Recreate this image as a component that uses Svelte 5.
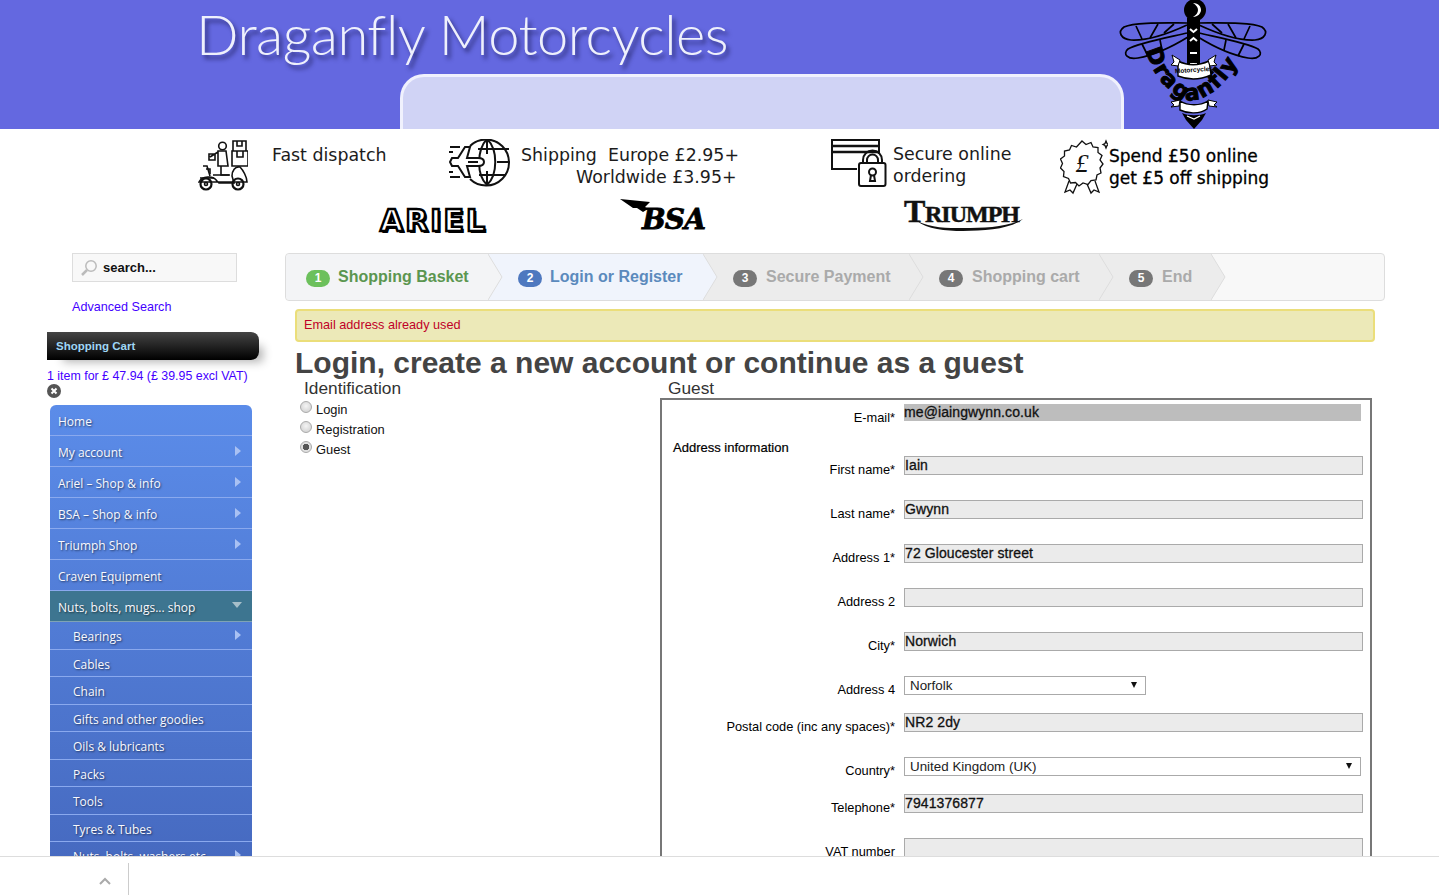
<script>
	const menu = [
		{ label: 'Home' },
		{ label: 'My account', more: true },
		{ label: 'Ariel – Shop & info', more: true },
		{ label: 'BSA – Shop & info', more: true },
		{ label: 'Triumph Shop', more: true },
		{ label: 'Craven Equipment' },
		{ label: 'Nuts, bolts, mugs... shop', open: true }
	];
	const submenu = [
		{ label: 'Bearings', more: true },
		{ label: 'Cables' },
		{ label: 'Chain' },
		{ label: 'Gifts and other goodies' },
		{ label: 'Oils & lubricants' },
		{ label: 'Packs' },
		{ label: 'Tools' },
		{ label: 'Tyres & Tubes' },
		{ label: 'Nuts, bolts, washers etc', more: true }
	];
	const steps = [
		{ n: 1, label: 'Shopping Basket', cls: 'done', width: 202 },
		{ n: 2, label: 'Login or Register', cls: 'current', width: 215 },
		{ n: 3, label: 'Secure Payment', cls: 'todo', width: 206 },
		{ n: 4, label: 'Shopping cart', cls: 'todo', width: 190 },
		{ n: 5, label: 'End', cls: 'todo', width: 112 }
	];
	const fields = [
		{ label: 'First name*', value: 'Iain' },
		{ label: 'Last name*', value: 'Gwynn' },
		{ label: 'Address 1*', value: '72 Gloucester street' },
		{ label: 'Address 2', value: '' },
		{ label: 'City*', value: 'Norwich' }
	];
</script>

<header class="banner">
	<h1 class="brand">Draganfly Motorcycles</h1>
	<div class="tab"></div>
	<svg class="logo" width="170" height="129" viewBox="1110 0 170 129" aria-hidden="true">
		<g fill="none" stroke="#000" stroke-width="1.7">
			<path d="M1187 23C1165 23 1135 22 1124 27C1117 32 1121 39 1131 40C1150 41 1172 32 1187 25" />
			<path d="M1187 33C1165 38 1138 43 1128 49C1122 54 1128 60 1138 58C1155 55 1175 45 1188 37" />
			<path d="M1136 26L1142 39M1158 24L1150 38M1174 24L1164 33M1142 44L1148 56M1160 40L1162 50" />
			<g transform="matrix(-1 0 0 1 2386 0)">
				<path d="M1187 23C1165 23 1135 22 1124 27C1117 32 1121 39 1131 40C1150 41 1172 32 1187 25" />
				<path d="M1187 33C1165 38 1138 43 1128 49C1122 54 1128 60 1138 58C1155 55 1175 45 1188 37" />
				<path d="M1136 26L1142 39M1158 24L1150 38M1174 24L1164 33M1142 44L1148 56M1160 40L1162 50" />
			</g>
		</g>
		<path d="M1187 18h13v60h-13z" fill="#000" />
		<path d="M1190 29l3.500 3 3.500-3M1190 41l3.500-3 3.500 3M1190 53h7M1190 64h7" stroke="#fff" stroke-width="2" fill="none" />
		<circle cx="1195" cy="10" r="11" fill="#000" />
		<path d="M1193 3c6 0 8 4 8 7s-3 7-8 7c3-2 5-4 5-7s-2-5-5-7z" fill="#fff" />
		<path id="logo-arc" d="M1146 50C1150 66 1158 80 1168 88C1178 97 1180 100 1192 100C1214 98 1233 76 1246 48" fill="none" />
		<text class="logo-word"><textPath href="#logo-arc">Draganfly</textPath></text>
		<path d="M1178 61c10 5 20 5 31 0l2 14c-11 5-23 5-33 1z" fill="#fff" stroke="#000" stroke-width="1.400" />
		<path d="M1180 101c8 5 20 5 28 0l-1 8c-7 5-19 5-27 1z" fill="#fff" stroke="#000" stroke-width="1.400" />
		<path d="M1180 60l-8-5 2 7-3 3 7 1zM1208 60l8-5-2 7 3 3-7 1zM1180 100l-9 2 3 3-3 2 8-1zM1208 100l9 2-3 3 3 2-8-1z" fill="#fff" stroke="#000" stroke-width="1" />
		<path d="M1182 113c6 3 18 3 24 0l-4 7-8 9-8-9z" fill="#000" />
		<path d="M1187 116l7 3 6-3" stroke="#fff" stroke-width="1.200" fill="none" />
		<text x="1194" y="72" text-anchor="middle" transform="rotate(-4 1194 72)" class="logo-small">Motorcycles</text>
	</svg>
</header>

<section class="promos">
	<div class="promo-row">
		<div class="promo">
			<svg class="scooter" width="50" height="52" viewBox="198 140 50 52" fill="none" stroke="#111" stroke-width="1.600" aria-hidden="true">
				<circle cx="222.500" cy="147" r="3.800" />
				<path d="M218 152h8l2 15h-10zM210 158l8-5M209 155h6v6h-6zM221 167v9h9" />
				<path d="M233 142h13v10h-13zM237 142v5h5v-5M232 152h16v15h-16zM237 152v6h6v-6" />
				<path d="M203 167h4l3 10M199 183c3-6 14-7 18-1l2 2h15l-2-7c0-5 3-10 8-9 3 3 7 10 7 15h-48z" />
				<path d="M206 170h4v5M213 176h16M200 179h14" />
				<circle cx="206" cy="185" r="5.500" stroke-width="2.200" />
				<circle cx="238" cy="185" r="5.500" stroke-width="2.200" />
				<circle cx="206" cy="185" r="1.500" />
				<circle cx="238" cy="185" r="1.500" />
			</svg>
			<p class="promo-text fast">Fast dispatch</p>
		</div>
		<div class="promo">
			<svg class="globe" width="62" height="48" viewBox="449 140 62 48" fill="none" stroke="#111" stroke-width="2" aria-hidden="true">
				<path d="M470 147A23 23 0 1 1 470 180" />
				<path d="M487 140C477 150 476 176 487 186M487 140C498 150 498 176 487 186M487 140V155M487 172V186M478 150H509M479 176H506M497 163H510" />
				<path fill="#fff" d="M452 159h6l7-11h5l-3 11h11c4 0 6 2 6 4s-2 4-6 4h-11l3 11h-5l-7-11h-6l-2-4z" />
				<path d="M450 148h10M449 153h4M450 178h10M449 173h4M468 163h10" />
			</svg>
			<p class="promo-text shipping">Shipping&nbsp; Europe £2.95+<br /><span class="indent">Worldwide £3.95+</span></p>
		</div>
		<div class="promo">
			<svg class="card" width="57" height="48" viewBox="831 140 57 48" fill="none" stroke="#111" stroke-width="2" aria-hidden="true">
				<path d="M857 170H832V141H879V155" />
				<path d="M832 147H879M832 153H879" stroke-width="2.500" />
				<rect x="859" y="164" width="26.500" height="23" rx="2" fill="#fff" />
				<path d="M863 164v-3a9.500 9.500 0 0 1 19 0v3M867 164v-3a5.500 5.500 0 0 1 11 0v3" />
				<circle cx="872.500" cy="173" r="3.500" />
				<path d="M871 176l-1 6h5l-1-6" />
			</svg>
			<p class="promo-text secure">Secure online<br />ordering</p>
		</div>
		<div class="promo">
			<svg class="rosette" width="48" height="56" viewBox="1060 139 48 56" fill="none" stroke="#111" stroke-width="1.300" aria-hidden="true">
				<path d="M1082 141l4 3.500 5-2 2 4.500 5 .5 0 5 4 3-2 4.500 3 4-3 4 1 5-4 2-1 5-5 .5-3 4-5-1.500-4 3-3.500-3.500-5 .5-2-4.500-5-2 .5-5-3.500-3.500 2-4.500-2-4.500 4-3 0-5 5-1 2-4.500 5 1.500z" />
				<path d="M1069 181l-4 11 5-2 3 3 4-9M1095 181l4 11-5-2-3 3-4-9" />
				<path d="M1106 141l1 2.500 2 1-2 1-1 2.500-1-2.500-2-1 2-1z" />
				<text x="1082" y="172" text-anchor="middle" class="pound">£</text>
			</svg>
			<p class="promo-text spend">Spend £50 online<br />get £5 off shipping</p>
		</div>
	</div>
	<div class="makes">
		<span class="ariel">ARIEL</span>
		<svg class="bsa" width="98" height="38" viewBox="616 202 98 38" aria-hidden="true">
			<path d="M618 204l30 3-5 5 3 2-5 3-6-4-4 0z" fill="#000" />
			<text x="640" y="234" class="bsa-word">BSA</text>
		</svg>
		<svg class="triumph" width="124" height="38" viewBox="902 197 124 38" aria-hidden="true">
			<text x="903" y="226" class="tri-t">T</text>
			<text x="924" y="226" class="tri-rest">RIUMPH</text>
			<path d="M916 225c14 7 30 7 46 7 22 0 44-1 60-9-12 10-38 12-60 12-18 0-36-2-46-10z" fill="#111" />
		</svg>
	</div>
</section>

<div class="page">
	<aside class="sidebar">
		<div class="search">
			<svg width="18" height="18" viewBox="0 0 18 18" fill="none" stroke="#bbb" aria-hidden="true">
				<circle cx="11" cy="7" r="5.200" stroke-width="1.500" />
				<path d="M7 11l-5 5" stroke-width="2.500" />
			</svg>
			<span>search...</span>
		</div>
		<a class="advanced" href="#advanced">Advanced Search</a>
		<div class="cart-title">Shopping Cart</div>
		<p class="cart-summary">1 item for £ 47.94 (£ 39.95 excl VAT)</p>
		<svg class="cart-clear" width="14" height="14" viewBox="0 0 14 14" aria-hidden="true">
			<circle cx="7" cy="7" r="7" fill="#555" />
			<path d="M4.500 4.500l5 5M9.500 4.500l-5 5" stroke="#fff" stroke-width="2" />
		</svg>
		<nav class="menu">
			{#each menu as item}
				<a class="item" class:open={item.open} href="#menu">
					{item.label}
					{#if item.more}<i class="arrow"></i>{/if}
					{#if item.open}<i class="arrow-down"></i>{/if}
				</a>
			{/each}
			{#each submenu as item}
				<a class="item sub" href="#menu">
					{item.label}
					{#if item.more}<i class="arrow"></i>{/if}
				</a>
			{/each}
		</nav>
	</aside>

	<main class="main">
		<ol class="steps">
			{#each steps as step}
				<li class="step {step.cls}" style="width: {step.width}px">
					<b class="badge">{step.n}</b>
					<span>{step.label}</span>
					<svg class="chevron" width="15" height="46" viewBox="0 0 15 46" aria-hidden="true">
						<path d="M0 0L14 23L0 46Z" class="chevron-fill" />
						<path d="M0 0L14 23L0 46" fill="none" stroke="#ddd" />
					</svg>
				</li>
			{/each}
		</ol>
		<div class="alert">Email address already used</div>
		<h2 class="title">Login, create a new account or continue as a guest</h2>
		<div class="columns">
			<div class="identify">
				<h3>Identification</h3>
				<label class="radio"><input type="radio" name="mode" />Login</label>
				<label class="radio"><input type="radio" name="mode" />Registration</label>
				<label class="radio"><input type="radio" name="mode" checked />Guest</label>
			</div>
			<div class="guest">
				<h3>Guest</h3>
				<form class="box">
					<div class="row email-row">
						<label for="email">E-mail*</label>
						<input id="email" class="email" value="me@iaingwynn.co.uk" readonly />
					</div>
					<p class="address-info">Address information</p>
					{#each fields as field}
						<div class="row">
							<label for={field.label}>{field.label}</label>
							<input id={field.label} value={field.value} readonly />
						</div>
					{/each}
					<div class="row short">
						<label for="region">Address 4</label>
						<div class="select region"><select id="region"><option>Norfolk</option></select></div>
					</div>
					<div class="row">
						<label for="postcode">Postal code (inc any spaces)*</label>
						<input id="postcode" value="NR2 2dy" readonly />
					</div>
					<div class="row short">
						<label for="country">Country*</label>
						<div class="select country"><select id="country"><option>United Kingdom (UK)</option></select></div>
					</div>
					<div class="row">
						<label for="phone">Telephone*</label>
						<input id="phone" value="7941376877" readonly />
					</div>
					<div class="row">
						<label for="vat">VAT number</label>
						<input id="vat" value="" readonly />
					</div>
				</form>
			</div>
		</div>
	</main>
</div>

<div class="footer-bar">
	<svg class="up" width="12" height="8" viewBox="0 0 12 8" fill="none" stroke="#aaa" stroke-width="2" aria-hidden="true">
		<path d="M1 7l5-5 5 5" />
	</svg>
	<div class="divider"></div>
</div>

<style>
	:global(html),
	:global(body) {
		height: 100%;
		overflow: hidden;
	}

	:global(body) {
		font-family: 'Liberation Sans', Arial, sans-serif;
		font-size: 12px;
		color: #000;
		background: #fff;
	}

	/* banner */
	.banner {
		position: relative;
		height: 129px;
		background: #6468e0;
		overflow: hidden;
	}

	.brand {
		height: 74px;
		margin: 0;
		padding-left: 196px;
		box-sizing: border-box;
		font-family: Lato, sans-serif;
		font-weight: 300;
		font-size: 56px;
		line-height: 68px;
		letter-spacing: -0.5px;
		color: #eef0fc;
		text-shadow: 3px 4px 4px rgba(20, 20, 70, 0.65);
		white-space: nowrap;
	}

	.tab {
		width: 724px;
		height: 55px;
		margin-left: 400px;
		box-sizing: border-box;
		background: #d0d3f5;
		border: 3px solid #f0f1fd;
		border-bottom: 0;
		border-radius: 24px 24px 0 0;
	}

	.logo {
		position: absolute;
		left: 1110px;
		top: 0;
	}

	.logo-word {
		font-family: 'DejaVu Sans', sans-serif;
		font-weight: 700;
		font-size: 22px;
		letter-spacing: 1.500px;
		fill: #000;
		stroke: #000;
		stroke-width: 1px;
	}

	.logo-small {
		font-family: 'Liberation Sans', sans-serif;
		font-weight: 700;
		font-size: 6.500px;
		fill: #000;
	}

	/* promo strip */
	.promos {
		height: 111px;
		padding-top: 10px;
		box-sizing: border-box;
	}

	.promo-row {
		display: grid;
		grid-template-columns: 251px 382px 229px auto;
		height: 56px;
		padding-left: 198px;
	}

	.promo {
		display: flex;
		align-items: flex-start;
	}

	.promo-text {
		margin: 0;
		font-family: 'DejaVu Sans', sans-serif;
		font-size: 17.400px;
		line-height: 22px;
		color: #1c1c1c;
		white-space: nowrap;
	}

	.fast {
		margin: 5px 0 0 24px;
	}

	.shipping {
		margin: 5px 0 0 10px;
	}

	.indent {
		margin-left: 55px;
	}

	.secure {
		margin: 4px 0 0 5px;
	}

	.spend {
		margin: 6px 0 0 1px;
		font-size: 17px;
		-webkit-text-stroke: 0.3px #000;
		color: #000;
	}

	.pound {
		font-family: 'Liberation Serif', serif;
		font-style: italic;
		font-size: 26px;
		fill: #111;
		stroke: none;
	}

	.makes {
		display: flex;
		align-items: flex-start;
		padding-left: 380px;
		height: 45px;
	}

	.ariel {
		width: 237px;
		height: 36px;
		margin-top: 6px;
		font-family: 'DejaVu Sans', sans-serif;
		font-weight: 700;
		font-size: 30px;
		line-height: 39px;
		letter-spacing: 2px;
		color: #fff;
		-webkit-text-stroke: 2.400px #000;
		text-shadow: 2px 2px 0 #000;
	}

	.bsa {
		margin: 2px 187px 0 1px;
	}

	.bsa-word {
		font-family: 'DejaVu Serif', serif;
		font-weight: 700;
		font-style: italic;
		font-size: 28px;
		letter-spacing: -0.800px;
		fill: #000;
		stroke: #000;
		stroke-width: 0.8px;
	}

	.triumph {
		margin-top: -2px;
	}

	.tri-t {
		font-family: 'Liberation Serif', serif;
		font-weight: 700;
		font-size: 32px;
		fill: #111;
		stroke: #111;
		stroke-width: 0.5px;
	}

	.tri-rest {
		font-family: 'Liberation Serif', serif;
		font-weight: 700;
		font-size: 24px;
		letter-spacing: -1px;
		fill: #111;
		stroke: #111;
		stroke-width: 0.5px;
	}

	/* page columns */
	.page {
		display: flex;
		padding: 13px 0 0 47px;
	}

	.sidebar {
		flex: none;
		width: 238px;
	}

	.search {
		display: flex;
		align-items: center;
		gap: 5px;
		width: 165px;
		height: 29px;
		margin-left: 25px;
		padding-left: 7px;
		box-sizing: border-box;
		background: #f8f8f8;
		border: 1px solid #ddd;
		font-size: 13px;
		font-weight: 700;
		color: #111;
	}

	.advanced {
		display: block;
		margin: 18px 0 0 25px;
		font-size: 12.600px;
		line-height: 15px;
		color: #4400ff;
		text-decoration: none;
	}

	.cart-title {
		width: 212px;
		height: 28px;
		margin-top: 17px;
		padding-left: 9px;
		box-sizing: border-box;
		background: linear-gradient(#454545, #000);
		border-radius: 0 8px 8px 0;
		box-shadow: 10px 8px 10px -6px rgba(0, 0, 0, 0.3);
		font-size: 11.500px;
		font-weight: 700;
		line-height: 28px;
		color: #9fd6f5;
	}

	.cart-summary {
		margin: 9px 0 0;
		font-size: 12.400px;
		line-height: 14px;
		color: #4400ff;
		white-space: nowrap;
	}

	.cart-clear {
		display: block;
		margin-top: 1px;
	}

	.menu {
		display: block;
		width: 202px;
		height: 480px;
		margin: 7px 0 0 3px;
		background: linear-gradient(#5b8ce9, #4568be);
		border-radius: 6px 6px 0 0;
		overflow: hidden;
	}

	.item {
		position: relative;
		display: block;
		height: 31px;
		padding-left: 8px;
		box-sizing: border-box;
		border-bottom: 1px solid #8aa9ee;
		font-family: 'Open Sans', sans-serif;
		font-size: 12px;
		line-height: 33px;
		color: #f8f9ff;
		text-decoration: none;
		text-shadow: 1px 1px 2px rgba(0, 0, 0, 0.55);
		white-space: nowrap;
	}

	.item.open {
		background: #3d7590;
		border-bottom-color: #7fa3b5;
		line-height: 33px;
	}

	.item.sub {
		height: 27.500px;
		padding-left: 23px;
		line-height: 29px;
	}

	.arrow {
		position: absolute;
		right: 11px;
		top: 10px;
		border-left: 6px solid #a9c1f3;
		border-top: 5px solid transparent;
		border-bottom: 5px solid transparent;
	}

	.sub .arrow {
		top: 8px;
	}

	.arrow-down {
		position: absolute;
		right: 10px;
		top: 11px;
		border-top: 6px solid #a7bfca;
		border-left: 5px solid transparent;
		border-right: 5px solid transparent;
	}

	/* main column */
	.main {
		flex: none;
		width: 1100px;
	}

	.steps {
		display: flex;
		height: 48px;
		margin: 0;
		padding: 0;
		box-sizing: border-box;
		background: #f8f8f8;
		border: 1px solid #ddd;
		border-radius: 4px;
		list-style: none;
	}

	.step {
		position: relative;
		display: flex;
		align-items: center;
		gap: 8px;
		padding-left: 20px;
		box-sizing: border-box;
		font-size: 16px;
		font-weight: 700;
		white-space: nowrap;
	}

	.step span {
		position: relative;
		z-index: 2;
		margin-bottom: 1px;
	}

	.badge {
		position: relative;
		z-index: 2;
		width: 24px;
		height: 17px;
		margin-top: 2px;
		border-radius: 9px;
		font-size: 12px;
		line-height: 17px;
		text-align: center;
		color: #fff;
	}

	.chevron {
		position: absolute;
		left: 100%;
		top: 0;
		z-index: 1;
	}

	.done {
		background: #f3f4f6;
		border-radius: 4px 0 0 4px;
		color: #5b9650;
	}

	.done .badge {
		background: #6cc05c;
	}

	.done .chevron-fill {
		fill: #f3f4f6;
	}

	.current {
		background: #f0f4fc;
		color: #5b8abd;
		padding-left: 30px;
	}

	.current .badge {
		background: #4e78bf;
	}

	.current .chevron-fill {
		fill: #f0f4fc;
	}

	.todo {
		background: #ececec;
		color: #aaa;
		padding-left: 30px;
		gap: 9px;
	}

	.todo .badge {
		background: #777;
	}

	.todo .chevron-fill {
		fill: #ececec;
	}

	.alert {
		height: 33px;
		margin: 8px 10px 0;
		padding-left: 7px;
		box-sizing: border-box;
		background: #ece9b8;
		border: 2px solid #ebde7a;
		border-radius: 4px;
		font-size: 12.700px;
		line-height: 28px;
		color: #c00028;
	}

	.title {
		margin: 4px 0 0 10px;
		font-size: 30px;
		font-weight: 700;
		line-height: 34px;
		color: #444;
		white-space: nowrap;
	}

	.columns {
		display: flex;
		padding-left: 15px;
	}

	.identify {
		width: 360px;
	}

	h3 {
		margin: 0 0 2px;
		font-size: 17.300px;
		font-weight: 400;
		line-height: 16px;
		color: #333;
	}

	.identify h3 {
		padding-left: 4px;
		margin-bottom: 3px;
	}

	.radio {
		display: flex;
		align-items: center;
		height: 20px;
		font-size: 12.900px;
		color: #111;
	}

	.radio input {
		appearance: none;
		width: 12px;
		height: 12px;
		margin: -5px 4px 0 0;
		background: radial-gradient(circle at 50% 40%, #f4f4f4, #ccc);
		border: 1px solid #aaa;
		border-radius: 50%;
		box-sizing: border-box;
	}

	.radio input:checked {
		background: radial-gradient(circle, #555 0 3px, #e0e0e0 3.500px);
	}

	.guest h3 {
		padding-left: 8px;
	}

	.box {
		width: 712px;
		height: 600px;
		box-sizing: border-box;
		padding-top: 4px;
		border: 2px solid #777;
	}

	.row {
		display: flex;
		align-items: flex-start;
		height: 44px;
	}

	.row label {
		flex: none;
		width: 233px;
		padding-top: 6px;
		font-size: 12.800px;
		text-align: right;
		white-space: nowrap;
	}

	.row input {
		width: 459px;
		height: 19px;
		margin: 0 0 0 9px;
		padding: 0 1px 2px 0;
		box-sizing: border-box;
		background: #ebebeb;
		border: 1px solid #aaa;
		border-radius: 0;
		font-family: inherit;
		font-size: 14px;
		font-weight: 400;
		letter-spacing: 0.1px;
		color: #111;
		-webkit-text-stroke: 0.3px #111;
	}

	.email-row {
		height: 36px;
	}

	.row .email {
		width: 457px;
		height: 17px;
		background: #bdbdbd;
		border: 0;
	}

	.address-info {
		height: 15px;
		margin: 1px 0 0 11px;
		font-size: 13px;
		line-height: 14px;
		-webkit-text-stroke: 0.2px #000;
	}

	.row.short {
		height: 37px;
	}

	.select {
		position: relative;
		margin-left: 9px;
	}

	.select::after {
		content: '';
		position: absolute;
		right: 9px;
		top: 6px;
		border-top: 6px solid #111;
		border-left: 3px solid transparent;
		border-right: 3px solid transparent;
	}

	.select select {
		appearance: none;
		display: block;
		width: 100%;
		height: 19px;
		padding: 0 0 1px 5px;
		box-sizing: border-box;
		background: #fff;
		border: 1px solid #aaa;
		border-radius: 0;
		font-family: inherit;
		font-size: 13.400px;
		color: #222;
	}

	.region {
		width: 242px;
	}

	.country {
		width: 457px;
	}

	/* bottom bar */
	.footer-bar {
		position: fixed;
		left: 0;
		right: 0;
		bottom: 0;
		z-index: 5;
		height: 39px;
		box-sizing: border-box;
		background: #fff;
		border-top: 1px solid #ddd;
	}

	.up {
		position: absolute;
		left: 99px;
		top: 20px;
	}

	.divider {
		position: absolute;
		left: 128px;
		top: 6px;
		bottom: 0;
		width: 1px;
		background: #ccc;
	}
</style>
